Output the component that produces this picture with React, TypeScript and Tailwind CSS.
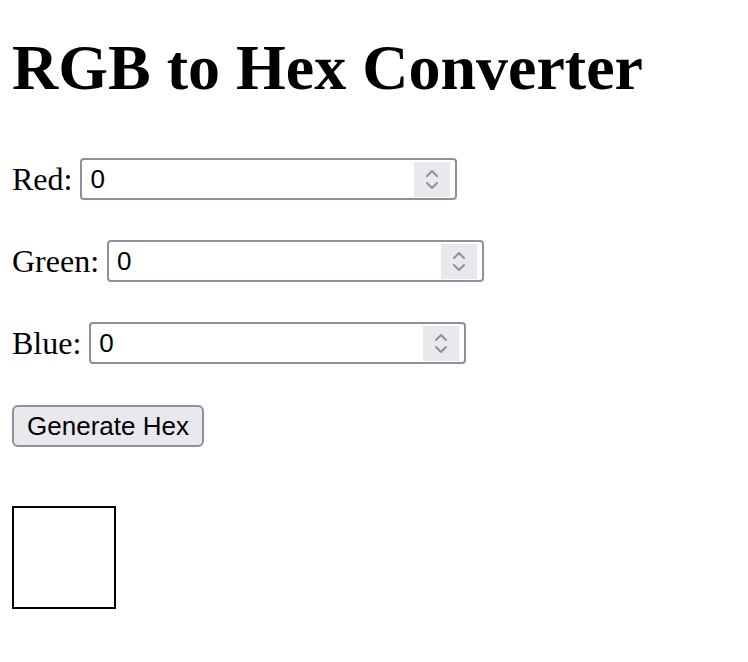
import { useState } from "react";

function Spinner() {
  return (
    <div className="flex h-[35px] w-[36px] flex-col items-center justify-center gap-[3px] bg-[#e9e9ed]">
      <svg width="14" height="9" viewBox="0 0 14 9" fill="none" stroke="#8f8f9d" strokeWidth="2" strokeLinecap="round" strokeLinejoin="round">
        <path d="M2 7 L7 2 L12 7" />
      </svg>
      <svg width="14" height="9" viewBox="0 0 14 9" fill="none" stroke="#8f8f9d" strokeWidth="2" strokeLinecap="round" strokeLinejoin="round">
        <path d="M2 2 L7 7 L12 2" />
      </svg>
    </div>
  );
}

function ColorField({ label, value, onChange }: { label: string; value: string; onChange: (v: string) => void }) {
  return (
    <div className="flex h-[42px] items-center">
      <label className="mr-[8px] whitespace-nowrap leading-[36px]">{label}</label>
      <div className="flex h-[42px] w-[377px] items-center rounded-[4px] border-2 border-[#8f8f9d] bg-white pl-[8px] pr-[5px]">
        <input
          type="text"
          value={value}
          onChange={(e) => onChange(e.target.value)}
          className="min-w-0 flex-1 bg-transparent font-['Liberation_Sans',Arial,sans-serif] text-[26px] text-black outline-none"
        />
        <Spinner />
      </div>
    </div>
  );
}

export default function App() {
  const [r, setR] = useState("0");
  const [g, setG] = useState("0");
  const [b, setB] = useState("0");
  const [hex, setHex] = useState("#ffffff");

  const toHex = (n: string) => Math.max(0, Math.min(255, parseInt(n) || 0)).toString(16).padStart(2, "0");

  return (
    <div className="min-h-screen bg-white px-[12px] pt-[32px] font-['Liberation_Serif','Times_New_Roman',serif] text-[32px] text-black">
      <h1 className="text-[64px] font-bold leading-[71px]">RGB to Hex Converter</h1>

      <div className="mt-[55px] flex flex-col gap-[40px]">
        <ColorField label="Red:" value={r} onChange={setR} />
        <ColorField label="Green:" value={g} onChange={setG} />
        <ColorField label="Blue:" value={b} onChange={setB} />
      </div>

      <button
        onClick={() => setHex("#" + toHex(r) + toHex(g) + toHex(b))}
        className="mt-[41px] h-[42px] w-[192px] rounded-[6px] border-2 border-[#8f8f9d] bg-[#e9e9ed] font-['Liberation_Sans',Arial,sans-serif] text-[26px] leading-none text-black"
      >
        Generate Hex
      </button>

      <div className="mt-[58px] h-[103px] w-[104px] border-2 border-black bg-white" data-hex={hex} />
    </div>
  );
}
